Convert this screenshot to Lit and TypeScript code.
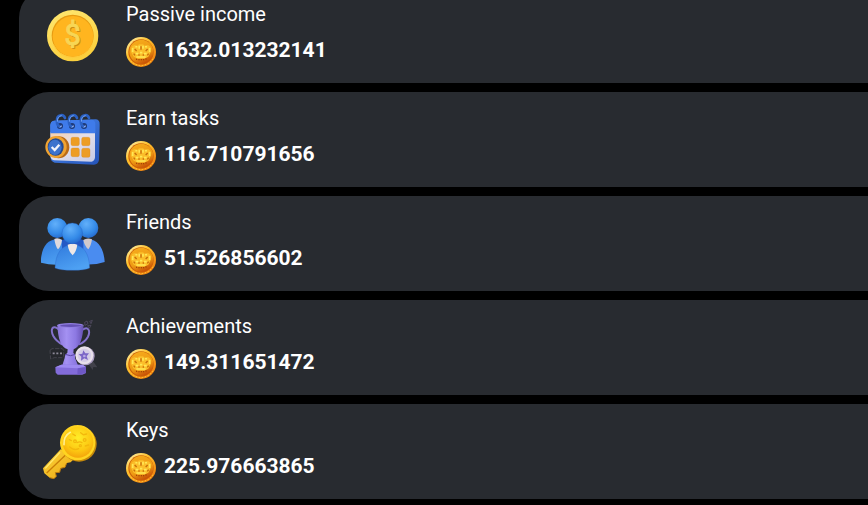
import { LitElement, TemplateResult, css, html, svg } from 'lit';
import { customElement, property } from 'lit/decorators.js';

const coinIcon = svg`
  <defs>
    <linearGradient id="rim" x1="0" y1="0" x2="0.4" y2="1">
      <stop offset="0" stop-color="#ffe873" />
      <stop offset="1" stop-color="#fbd03e" />
    </linearGradient>
  </defs>
  <circle cx="128" cy="119" r="77" fill="url(#rim)" />
  <circle cx="128" cy="119" r="63" fill="#e89c12" />
  <circle cx="129" cy="121" r="61" fill="#ffb51f" />
  <path d="M70 145A63 63 0 0 0 187 145" fill="none" stroke="#ffc93a" stroke-width="3" />
  <g font-family="Roboto, sans-serif" font-size="86" text-anchor="middle">
    <text x="131" y="150" fill="#c98a14" stroke="#c98a14" stroke-width="2">$</text>
    <text x="128" y="148" fill="#f7d655" stroke="#f7d655" stroke-width="3">$</text>
  </g>
`;

const calendarIcon = svg`
  <defs>
    <linearGradient id="blue" x1="0" y1="0" x2="1" y2="1">
      <stop offset="0" stop-color="#4d8df2" />
      <stop offset="1" stop-color="#2453b8" />
    </linearGradient>
    <linearGradient id="sheet" x1="0" y1="0" x2="1" y2="1">
      <stop offset="0" stop-color="#f8cfa9" />
      <stop offset="0.45" stop-color="#e3dfea" />
      <stop offset="1" stop-color="#c6cbe6" />
    </linearGradient>
  </defs>
  <path d="M72 62L198 58Q210 60 209 74L207 180Q204 194 192 194L74 188Q62 184 62 174L61 76Q62 63 72 62Z" fill="url(#blue)" />
  <path d="M61 97H195V172Q194 184 184 185L72 181Q62 178 61 168Z" fill="url(#sheet)" />
  <path d="M61 77Q62 63 72 62L186 59Q196 61 196 72V100H61Z" fill="#3f7bea" />
  <g fill="#1e3a78">
    <circle cx="90" cy="78" r="9" />
    <circle cx="126" cy="78" r="9" />
    <circle cx="162" cy="78" r="9" />
  </g>
  <g fill="none" stroke-linecap="round">
    <path d="M91 80C78 78 76 48 92 46Q101 44 105 54M127 80C114 78 112 48 128 46Q137 44 141 54M163 80C150 78 148 48 164 46Q173 44 177 54" stroke="#2b61c4" stroke-width="8" />
    <path d="M82 64Q82 48 94 47M118 64Q118 48 130 47M154 64Q154 48 166 47" stroke="#70a2f2" stroke-width="3" />
    <path d="M90 81L95 78M126 81L131 78M162 81L167 78" stroke="#a9bbe8" stroke-width="3" />
  </g>
  <g fill="#ed9d24" stroke="#d68a24" stroke-width="1">
    <rect x="123" y="112" width="25" height="25" rx="5" />
    <rect x="155" y="112" width="25" height="25" rx="5" />
    <rect x="123" y="144" width="25" height="26" rx="5" />
    <rect x="155" y="145" width="25" height="27" rx="5" />
  </g>
  <ellipse cx="86" cy="142" rx="32" ry="33" fill="#b96b18" />
  <ellipse cx="78" cy="141" rx="32" ry="33" fill="#f0a331" />
  <ellipse cx="77" cy="141" rx="24" ry="26" fill="#254a91" />
  <ellipse cx="75" cy="142" rx="20" ry="23" fill="#3d73cd" />
  <path d="M65 141L74 150L88 134" fill="none" stroke="#f1f3fa" stroke-width="7" />
`;

const friendsIcon = svg`
  <defs>
    <radialGradient id="head" cx="0.4" cy="0.3" r="0.8">
      <stop offset="0" stop-color="#62b0fa" />
      <stop offset="0.6" stop-color="#348ae8" />
      <stop offset="1" stop-color="#2160c4" />
    </radialGradient>
    <linearGradient id="body" x1="0" y1="0" x2="0.5" y2="1">
      <stop offset="0" stop-color="#3079dc" />
      <stop offset="1" stop-color="#4ea1f3" />
    </linearGradient>
  </defs>
  <path d="M32 176C34 134 48 106 83 106S122 134 124 176Q78 188 32 176Z" fill="url(#body)" />
  <path d="M132 176C134 134 145 106 175 106S222 136 224 174Q180 188 132 176Z" fill="#4a8cf0" />
  <path d="M96 108Q128 96 160 108V134H96Z" fill="#2359c5" />
  <path d="M73 105Q84 100 96 108Q93 128 84 136Q76 127 73 105Z" fill="#ded9dd" />
  <path d="M160 108Q172 100 186 106Q183 126 175 136Q164 127 160 108Z" fill="#d1c9cc" />
  <circle cx="82" cy="72" r="30" fill="url(#head)" />
  <circle cx="175" cy="72" r="30" fill="url(#head)" />
  <path d="M75 192C77 148 94 122 128 122S177 148 179 192Q165 199 128 199T75 192Z" fill="url(#body)" stroke="#2762c4" stroke-width="1" />
  <path d="M113 122Q128 116 142 122Q139 143 128 154Q116 143 113 122Z" fill="#f0e9e6" />
  <circle cx="127" cy="88" r="31" fill="url(#head)" stroke="#2762c4" stroke-width="1" />
`;

const trophyIcon = svg`
  <defs>
    <linearGradient id="cup" x1="0" y1="0" x2="1" y2="0">
      <stop offset="0" stop-color="#8873d6" />
      <stop offset="0.35" stop-color="#a491f2" />
      <stop offset="0.7" stop-color="#8c78e2" />
      <stop offset="1" stop-color="#6650b2" />
    </linearGradient>
  </defs>
  <g fill="none" stroke="#8472cc" stroke-width="6">
    <path d="M86 64C68 48 60 64 70 84Q78 99 98 110" />
    <path d="M156 66C175 53 182 68 174 86Q165 102 147 109" />
  </g>
  <path d="M82 52C84 92 92 118 113 124L112 135Q105 138 104 150L97 172H144L135 150Q137 139 130 135L131 124C151 115 158 92 161 51Z" fill="url(#cup)" />
  <ellipse cx="121" cy="52" rx="40" ry="7" fill="#907de0" />
  <ellipse cx="123" cy="53" rx="33" ry="4" fill="#6551b4" />
  <path d="M105 139Q122 147 137 139" fill="none" stroke="#5945a5" stroke-width="3" />
  <path d="M76 178L94 170H158L168 177V195L157 200H83L77 194Z" fill="#836cda" />
  <path d="M76 178L94 170H158L168 177L143 181Z" fill="#9d8af0" />
  <path d="M143 181L168 177V195L142 200Z" fill="#6f59c6" />
  <path d="M60 127L66 122H97L101 127V145L95 149H73L62 153Z" fill="#25272c" stroke="#55535e" stroke-width="2" stroke-dasharray="13 4" />
  <path d="M68 136H74M79 136H85M90 136H96" stroke="#8d8998" stroke-width="5" />
  <path d="M164 43L171 39L174 47L165 52ZM179 40L187 37L183 47ZM173 53L183 52L178 61ZM155 55L163 51" fill="#292735" stroke="#5a556a" stroke-width="2" />
  <path d="M176 169L189 160L202 178L190 177L188 186Z" fill="#41414a" />
  <circle cx="166" cy="144" r="28" fill="#a89bbd" />
  <circle cx="163" cy="142" r="27" fill="#e8e0ea" />
  <circle cx="163" cy="142" r="20" fill="#d5cce6" />
  <path d="M160 127L166 136L177 136L170 145L174 156L163 151L153 158L154 146L146 139L157 137Z" fill="#7c66c7" />
  <circle cx="163" cy="144" r="4" fill="#b7a7e4" />
`;

const keyIcon = svg`
  <defs>
    <linearGradient id="shaft" x1="0" y1="0" x2="1" y2="1">
      <stop offset="0" stop-color="#ffd83c" />
      <stop offset="1" stop-color="#e8a311" />
    </linearGradient>
    <radialGradient id="bow" cx="0.5" cy="0.35" r="0.65">
      <stop offset="0" stop-color="#ffed28" />
      <stop offset="0.65" stop-color="#fdc812" />
      <stop offset="1" stop-color="#f4a50c" />
    </radialGradient>
  </defs>
  <path d="M92 112L39 169L43 184L59 197L72 200L79 193L76 182L89 181L92 169L105 166L110 153L122 151L136 137Z" fill="url(#shaft)" />
  <path d="M110 126L50 183" stroke="#c97e08" stroke-width="4" />
  <path d="M90 121L46 169" stroke="#ffeb72" stroke-width="4" />
  <path d="M59 197L72 200L79 193L76 182L89 181L92 169L105 166L110 153" fill="none" stroke="#bd7b0c" stroke-width="3" />
  <circle cx="147" cy="96" r="53" fill="#c68a0b" />
  <circle cx="143" cy="92" r="53" fill="#ffd420" />
  <circle cx="144" cy="91" r="46" fill="url(#bow)" />
  <path d="M102 98Q100 73 121 61" fill="none" stroke="#fff091" stroke-width="5" stroke-linecap="round" />
  <g fill="none" stroke="#f3b80c" stroke-width="4" stroke-linecap="round">
    <path d="M128 66L136 71M152 62L160 68L170 66M118 83L124 86M119 105Q133 117 146 110M166 102L176 99M141 92Q150 87 156 92" />
    <circle cx="135" cy="88" r="4" />
    <circle cx="164" cy="84" r="4" />
    <circle cx="151" cy="101" r="3" />
  </g>
`;

const tokenIcon = svg`
  <defs>
    <linearGradient id="edge" x1="0" y1="0" x2="0.8" y2="1">
      <stop offset="0" stop-color="#fff8c0" />
      <stop offset="0.4" stop-color="#ffc22e" />
      <stop offset="1" stop-color="#f07a0a" />
    </linearGradient>
    <linearGradient id="face" x1="0.2" y1="0" x2="0.7" y2="1">
      <stop offset="0" stop-color="#f6ab1c" />
      <stop offset="0.6" stop-color="#ee9a14" />
      <stop offset="1" stop-color="#c44a05" />
    </linearGradient>
  </defs>
  <circle cx="63" cy="66" r="45" fill="url(#edge)" />
  <path d="M27 86A42 42 0 0 0 99 86" fill="none" stroke="#ffd23c" stroke-width="3" stroke-dasharray="4 5" />
  <circle cx="63" cy="66" r="38" fill="#cc6008" />
  <circle cx="64" cy="65" r="36" fill="url(#face)" />
  <path d="M35 50L43 45L51 49L57 43H69L76 49L84 45L92 51V67L85 80L73 86H53L41 80L33 66Z" fill="#fbbe2a" />
  <path d="M38 54V66M46 50H52M58 47V56M69 47V56M75 50H81M89 54V66M47 71H55M60 68H67M72 71H80M49 81H77" stroke="#ffe755" stroke-width="5" />
  <path d="M44 57L50 63M83 57L77 63M63 49V59M41 71L45 76M86 71L82 76M55 75H59M68 75H72" stroke="#c76d0b" stroke-width="4" />
  <path d="M50 86V90M57 87V91M64 87V91M71 87V91M78 85V89" stroke="#9c3b05" stroke-width="3" />
`;

interface Earning {
  label: string;
  amount: string;
  icon: TemplateResult<2>;
}

const earnings: Earning[] = [
  { label: 'Passive income', amount: '1632.013232141', icon: coinIcon },
  { label: 'Earn tasks', amount: '116.710791656', icon: calendarIcon },
  { label: 'Friends', amount: '51.526856602', icon: friendsIcon },
  { label: 'Achievements', amount: '149.311651472', icon: trophyIcon },
  { label: 'Keys', amount: '225.976663865', icon: keyIcon },
];

@customElement('earning-card')
export class EarningCard extends LitElement {
  @property({ attribute: false }) earning!: Earning;

  render() {
    const { label, amount, icon } = this.earning;
    return html`
      <svg class="icon" viewBox="33 21 195 195" aria-hidden="true">${icon}</svg>
      <div class="info">
        <div class="label">${label}</div>
        <div class="amount">
          <svg class="token" viewBox="18 21 90 90" aria-hidden="true">${tokenIcon}</svg>
          <span>${amount}</span>
        </div>
      </div>
    `;
  }

  static styles = css`
    :host {
      display: flex;
      align-items: center;
      gap: 20px;
      box-sizing: border-box;
      padding: 10px 22px;
      border-radius: 30px;
      background-color: #282b30;
      color: #fff;
    }

    .icon {
      flex: none;
      width: 65px;
      height: 65px;
    }

    .info {
      display: flex;
      flex-direction: column;
      gap: 9px;
      padding-bottom: 4px;
    }

    .label {
      font-size: 20px;
      line-height: 28px;
    }

    .amount {
      display: flex;
      align-items: flex-start;
      gap: 8px;
      font-size: 21px;
      font-weight: 700;
      line-height: 26px;
    }

    .token {
      width: 30px;
      height: 30px;
    }
  `;
}

@customElement('app-root')
export class AppRoot extends LitElement {
  render() {
    return html`
      <main class="page">
        <div class="list">
          ${earnings.map((earning) => html`<earning-card .earning=${earning}></earning-card>`)}
        </div>
      </main>
    `;
  }

  static styles = css`
    :host {
      display: block;
      background-color: #000;
      font-family: Roboto, sans-serif;
    }

    .page {
      box-sizing: border-box;
      min-height: 100vh;
      overflow: hidden;
      padding-left: 19px;
    }

    /* scrolled a little, and wider than the window on the right */
    .list {
      display: grid;
      grid-auto-rows: minmax(95px, auto);
      gap: 9px;
      margin: -12px -40px 0 0;
    }
  `;
}
